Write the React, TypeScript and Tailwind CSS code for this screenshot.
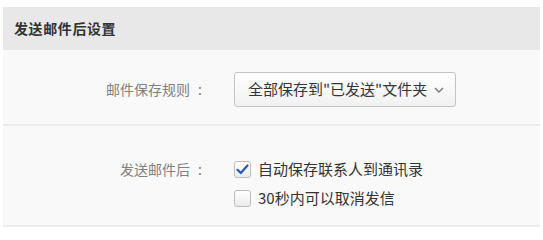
const font = { fontFamily: '"Noto Sans CJK SC", "Noto Sans", sans-serif' };

function CheckBox({ checked }: { checked?: boolean }) {
    return (
        <span className="flex h-[17px] w-[17px] shrink-0 items-center justify-center rounded-[3px] border border-[#bdbdbd] bg-gradient-to-b from-white to-[#ececec]">
            {checked && (
                <svg width="13" height="11" viewBox="0 0 13 11">
                    <path
                        d="M1.5 5.8 L4.8 9 L11.5 1.5"
                        fill="none"
                        stroke="#2557b4"
                        strokeWidth="2.2"
                        strokeLinecap="round"
                        strokeLinejoin="round"
                    />
                </svg>
            )}
        </span>
    );
}

export default function App() {
    return (
        <div
            className="h-[240px] w-[543px] bg-white px-[3px] pt-[7px]"
            style={font}
        >
            <div className="flex h-[43px] items-center bg-[#e8e8e8] pl-[11px] text-[14px] font-bold tracking-[0.6px] text-[#333]">
                发送邮件后设置
            </div>

            <div className="flex h-[76px] items-start border-b-2 border-[#ebebeb] bg-[#f9f9f9] pt-[22px]">
                <div className="flex h-[35px] w-[205px] items-center justify-end pr-[6px] text-[14px] text-[#808080]">
                    邮件保存规则<span className="ml-[8px]">:</span>
                </div>
                <div className="ml-[26px] flex h-[35px] w-[222px] items-center justify-between rounded-[3px] border border-[#c4c4c4] bg-gradient-to-b from-white to-[#f1f1f1] pl-[13px] pr-[11px] text-[15px] text-[#333]">
                    <span>全部保存到"已发送"文件夹</span>
                    <svg width="10" height="6" viewBox="0 0 10 6">
                        <path
                            d="M1 1 L5 5 L9 1"
                            fill="none"
                            stroke="#777"
                            strokeWidth="1.4"
                        />
                    </svg>
                </div>
            </div>

            <div className="flex items-start border-b-2 border-[#ebebeb] bg-[#f9f9f9] pb-[12px] pt-[29px]">
                <div className="flex h-[29px] w-[205px] items-center justify-end pr-[6px] text-[14px] text-[#808080]">
                    发送邮件后<span className="ml-[8px]">:</span>
                </div>
                <div className="ml-[26px] flex flex-col">
                    <label className="flex h-[29px] items-center gap-[7px] text-[15px] text-[#333]">
                        <CheckBox checked />
                        自动保存联系人到通讯录
                    </label>
                    <label className="flex h-[29px] items-center gap-[7px] text-[15px] text-[#333]">
                        <CheckBox />
                        30秒内可以取消发信
                    </label>
                </div>
            </div>
        </div>
    );
}
